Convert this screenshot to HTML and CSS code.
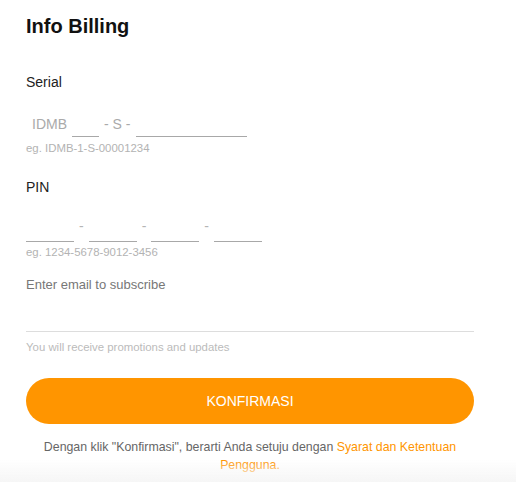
FILE: index.html
```html
<!DOCTYPE html>
<html lang="id">
<head>
<meta charset="utf-8">
<title>Info Billing</title>
<link rel="stylesheet" href="styles.css">
</head>
<body>
<main class="page">
  <h1 class="title">Info Billing</h1>

  <label class="label label-serial">Serial</label>
  <div class="row serial-row">
    <span class="fix fix-first">IDMB</span>
    <input class="line w-27" type="text">
    <span class="fix">- S -</span>
    <input class="line w-111" type="text">
  </div>
  <p class="hint">eg. IDMB-1-S-00001234</p>

  <label class="label label-pin">PIN</label>
  <div class="row pin-row">
    <input class="line w-48" type="text">
    <span class="dash">-</span>
    <input class="line w-48" type="text">
    <span class="dash">-</span>
    <input class="line w-48" type="text">
    <span class="dash">-</span>
    <input class="line w-48" type="text">
  </div>
  <p class="hint">eg. 1234-5678-9012-3456</p>

  <label class="email-label">Enter email to subscribe</label>
  <input class="email" type="email">
  <p class="hint hint-promo">You will receive promotions and updates</p>

  <button class="confirm" type="button">KONFIRMASI</button>

  <p class="terms">Dengan klik "Konfirmasi", berarti Anda setuju dengan <a href="#">Syarat dan Ketentuan Pengguna.</a></p>
</main>
<div class="bottom-fade"></div>
</body>
</html>
```

FILE: styles.css
```css
html, body {
  margin: 0;
  padding: 0;
  background: #ffffff;
}

body {
  font-family: "Liberation Sans", Arial, Helvetica, sans-serif;
  color: #222222;
}

.page {
  width: 448px;
  padding: 0 0 0 26px;
  display: flex;
  flex-direction: column;
}

.title {
  margin: 14px 0 0;
  font-size: 20px;
  line-height: 24px;
  font-weight: bold;
  color: #111111;
}

.label {
  display: block;
  font-size: 14px;
  line-height: 20px;
  color: #222222;
}

.label-serial {
  margin-top: 34px;
}

.label-pin {
  margin-top: 22px;
}

.row {
  display: flex;
  align-items: flex-end;
  height: 24px;
}

.serial-row {
  margin-top: 21px;
  gap: 5px;
}

.pin-row {
  margin-top: 20px;
  height: 25px;
}

.fix {
  font-size: 14px;
  line-height: 20px;
  padding-bottom: 3px;
  color: #aaaaaa;
  white-space: pre;
}

.fix-first {
  padding-left: 6px;
}

.serial-row .fix:last-of-type {
  margin-right: 1px;
}

.line {
  box-sizing: border-box;
  height: 24px;
  margin: 0;
  padding: 0;
  border: none;
  border-bottom: 1px solid #a8a8a8;
  background: transparent;
  font: inherit;
  outline: none;
}

.w-27 { width: 27px; }
.w-111 { width: 111px; }
.w-48 { width: 48px; height: 25px; }

.dash {
  font-size: 14px;
  line-height: 20px;
  padding-bottom: 6px;
  margin: 0 5px;
  color: #b5b5b5;
}

.hint {
  margin: 4px 0 0;
  font-size: 11.4px;
  line-height: 14px;
  color: #b3b3b3;
}

.pin-row + .hint {
  margin-top: 3px;
}

.email-label {
  display: block;
  margin-top: 17px;
  font-size: 13px;
  line-height: 18px;
  color: #777777;
}

.email {
  box-sizing: border-box;
  width: 448px;
  height: 38px;
  margin: 0;
  padding: 0;
  border: none;
  border-bottom: 1px solid #dddddd;
  background: transparent;
  outline: none;
}

.hint-promo {
  margin-top: 8px;
  color: #bbbbbb;
}

.confirm {
  margin-top: 24px;
  width: 448px;
  height: 46px;
  border: none;
  border-radius: 23px;
  background: #ff9500;
  color: #ffffff;
  font-family: "Liberation Sans", Arial, Helvetica, sans-serif;
  font-size: 14px;
  line-height: 20px;
  padding: 0;
  cursor: pointer;
}

.terms {
  margin: 14px 0 0;
  font-size: 12.35px;
  line-height: 18px;
  text-align: center;
  color: #666666;
}

.terms a {
  color: #ff9500;
  text-decoration: none;
}

.bottom-fade {
  position: fixed;
  left: 0;
  right: 0;
  bottom: 0;
  height: 22px;
  background: linear-gradient(to bottom, rgba(246, 246, 246, 0), rgba(246, 246, 246, 1));
  pointer-events: none;
}
```
